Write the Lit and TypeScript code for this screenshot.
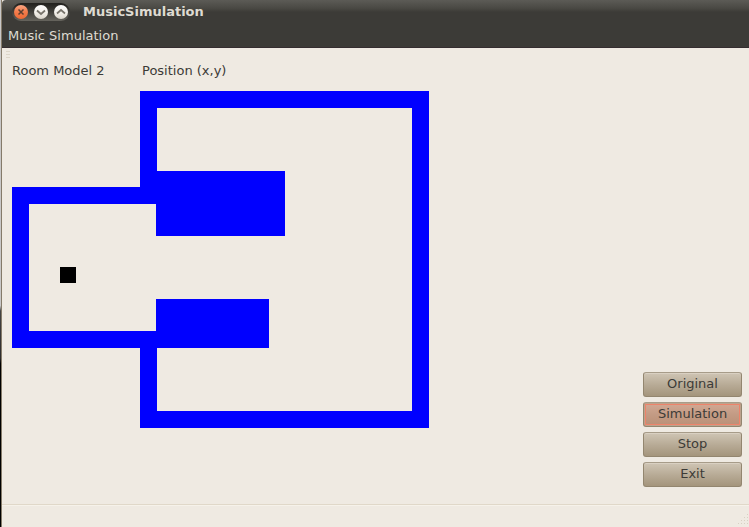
import { LitElement, html, css, svg } from "lit";
import { customElement, state } from "lit/decorators.js";
import { classMap } from "lit/directives/class-map.js";

@customElement("window-controls")
export class WindowControls extends LitElement {
  static styles = css`
    :host {
      display: block;
    }
    .tray {
      display: flex;
      align-items: center;
      gap: 6px;
      height: 18px;
      padding: 0 2px;
      border-radius: 9px;
      background: linear-gradient(#21201d, #3a3934 40%, #66645d);
    }
    .control {
      display: block;
      width: 14px;
      height: 14px;
      padding: 0;
      border: 0;
      border-radius: 50%;
      background: linear-gradient(#ffffff, #f0ede6 60%, #d8d3c8);
    }
    .close {
      background: linear-gradient(#f9a583, #f37b4a 50%, #ee6a35);
    }
    .glyph {
      display: block;
      width: 14px;
      height: 14px;
      fill: none;
      stroke: #77736a;
      stroke-width: 1.7;
    }
    .close .glyph {
      stroke: #5d3f30;
      stroke-width: 1.5;
    }
  `;

  render() {
    const controls = [
      { name: "Close", close: true, path: svg`<path d="M4.500 4.500l5 5M9.500 4.500l-5 5" />` },
      { name: "Minimize", close: false, path: svg`<path d="M3 5.500L7 9l4-3.500" />` },
      { name: "Maximize", close: false, path: svg`<path d="M3 8.500L7 5l4 3.500" />` },
    ];
    return html`<div class="tray">
      ${controls.map(
        (c) => html`<button class=${classMap({ control: true, close: c.close })} aria-label=${c.name}>
          <svg class="glyph" viewBox="0 0 14 14" aria-hidden="true">${c.path}</svg>
        </button>`
      )}
    </div>`;
  }
}

@customElement("room-map")
export class RoomMap extends LitElement {
  static styles = css`
    :host {
      display: block;
    }
    .map {
      display: block;
      width: 417px;
      height: 337px;
      shape-rendering: crispEdges;
    }
    .wall {
      fill: #0000ff;
    }
    .robot {
      fill: #000000;
    }
  `;

  render() {
    return html`<svg class="map" viewBox="0 0 417 337" role="img" aria-label="Room model">
      <path
        class="wall"
        d="M128 0H417V337H128V257H0V96H128ZM145 17V80H273V145H144V113H17V240H144V208H257V257H145V320H400V17Z"
      />
      <rect class="robot" x="48" y="176" width="16" height="16" />
    </svg>`;
  }
}

@customElement("app-root")
export class AppRoot extends LitElement {
  static styles = css`
    :host {
      display: flex;
      box-sizing: border-box;
      min-height: 100vh;
      font: 13px/16px "DejaVu Sans", sans-serif;
      color: #3c3b37;
      background: #efeae2;
    }
    .backdrop {
      flex: none;
      width: 1px;
      background: linear-gradient(#c9c8c8 58%, #444444 59%, #2c2b2b 68%, #000000 69%);
    }
    .window {
      flex: 1;
      display: flex;
      flex-direction: column;
      min-width: 0;
      border-left: 1px solid #857b6a;
    }
    .titlebar {
      display: flex;
      align-items: center;
      gap: 13px;
      height: 24px;
      padding-left: 10px;
      border-top-left-radius: 4px;
      background: linear-gradient(#5c5b56, #4a4944 8px, #3c3b37 12px);
    }
    .title {
      margin: 0;
      font-size: 13px;
      font-weight: bold;
      color: #dfdbd2;
    }
    .menubar {
      display: flex;
      height: 23px;
      background: #3c3b37;
      border-bottom: 1px solid #352d30;
    }
    .menu {
      padding: 0 6px;
      border: 0;
      background: none;
      font: inherit;
      color: #dfdbd2;
    }
    .toolbar {
      height: 12px;
      padding: 3px 0 0 4px;
    }
    .handle {
      width: 4px;
      height: 7px;
      background: repeating-linear-gradient(#ddd6c9 0 1px, transparent 1px 3px);
    }
    .content {
      flex: 1;
      display: flex;
      justify-content: space-between;
      padding: 0 7px 17px 10px;
    }
    .labels {
      display: grid;
      grid-template-columns: 130px auto;
      margin-bottom: 12px;
    }
    .label {
      margin: 0;
    }
    .actions {
      display: flex;
      flex-direction: column;
      justify-content: flex-end;
      gap: 5px;
      width: 99px;
    }
    .action {
      height: 25px;
      padding: 0 0 1px;
      border: 1px solid #93866f;
      border-top-color: #a79c89;
      border-radius: 3px;
      background: linear-gradient(#cfc5b4, #b6a994 55%, #a4957c);
      box-shadow: inset 0 1px #d9d0c2;
      font: inherit;
      color: #3c3b37;
    }
    .action.active {
      background: linear-gradient(#d3a995, #c39b84 50%, #ba8f76);
      box-shadow: inset 0 0 0 1px #bda38d, inset 0 0 0 2px #ee836a;
    }
    .statusbar {
      display: flex;
      justify-content: flex-end;
      align-items: flex-end;
      height: 22px;
      border-top: 1px solid #e0d8c9;
      box-shadow: inset 0 1px #f6f2ea;
    }
    .grip {
      display: block;
      width: 12px;
      height: 14px;
      fill: #d8d1c3;
    }
  `;

  @state() private active = "Simulation";

  render() {
    return html`
      <div class="backdrop"></div>
      <div class="window">
        <header class="titlebar">
          <window-controls></window-controls>
          <h1 class="title">MusicSimulation</h1>
        </header>
        <nav class="menubar"><button class="menu">Music Simulation</button></nav>
        <div class="toolbar"><div class="handle"></div></div>
        <main class="content">
          <section>
            <div class="labels">
              <p class="label">Room Model 2</p>
              <p class="label">Position (x,y)</p>
            </div>
            <room-map></room-map>
          </section>
          <div class="actions">
            ${["Original", "Simulation", "Stop", "Exit"].map(
              (name) => html`<button
                class=${classMap({ action: true, active: name === this.active })}
                @click=${() => (this.active = name)}
              >${name}</button>`
            )}
          </div>
        </main>
        <footer class="statusbar">
          <svg class="grip" viewBox="0 0 12 14" aria-hidden="true">
            <path d="M10 1h1v1h-1zM7 4h1v1h-1zM10 4h1v1h-1zM4 7h1v1h-1zM7 7h1v1h-1zM10 7h1v1h-1zM1 10h1v1h-1zM4 10h1v1h-1zM7 10h1v1h-1zM10 10h1v1h-1z" />
          </svg>
        </footer>
      </div>
    `;
  }
}
